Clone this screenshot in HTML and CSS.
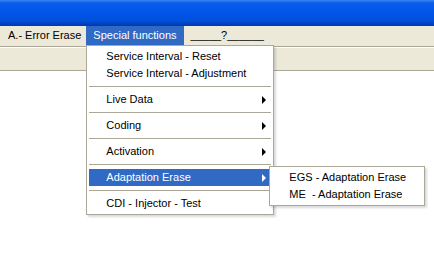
FILE: index.html
```html
<!DOCTYPE html>
<html lang="en">
<head>
    <meta charset="UTF-8">
    <title>Special functions</title>
    <link rel="stylesheet" href="styles.css">
</head>
<body>
    <!-- Window title -->
    <div class="titlebar"></div>

    <!-- Menu bar -->
    <div class="menubar">
        <div class="menu-item first">A.- Error Erase</div>
        <div class="menu-item open">Special functions
            <div class="dropdown">
                <div class="entry">Service Interval - Reset</div>
                <div class="entry">Service Interval - Adjustment</div>
                <div class="sep"></div>
                <div class="entry sub">Live Data<span class="arrow"></span></div>
                <div class="sep"></div>
                <div class="entry sub">Coding<span class="arrow"></span></div>
                <div class="sep"></div>
                <div class="entry sub">Activation<span class="arrow"></span></div>
                <div class="sep"></div>
                <div class="entry sub active">Adaptation Erase<span class="arrow"></span>
                    <div class="dropdown submenu">
                        <div class="entry">EGS - Adaptation Erase</div>
                        <div class="entry">ME&nbsp; - Adaptation Erase</div>
                    </div>
                </div>
                <div class="sep"></div>
                <div class="entry">CDI - Injector - Test</div>
            </div>
        </div>
        <div class="menu-item">_____?______</div>
    </div>

    <!-- Tool band -->
    <div class="toolband"></div>

    <div class="workspace"></div>
</body>
</html>
```

FILE: styles.css
```css
body {
    margin: 0;
    padding: 0;
    font-family: "Liberation Sans", Arial, sans-serif;
    font-size: 11px;
    color: #000;
    background-color: #fff;
}
.titlebar {
    height: 26px;
    background: linear-gradient(#3a86f4 0, #0a5ceb 12%, #0055e6 55%, #004fd8 80%, #0038b0 100%);
}
.menubar {
    display: flex;
    height: 20px;
    background-color: #ece9d8;
}
.menu-item {
    position: relative;
    height: 19px;
    line-height: 19px;
    padding: 0 7px;
    white-space: nowrap;
}
.menu-item.first {
    padding: 0 5px 0 8px;
}
.menu-item.open {
    background-color: #316ac5;
    color: #fff;
}
.dropdown {
    position: absolute;
    left: 0;
    top: 100%;
    width: 182px;
    padding: 2px;
    background-color: #fff;
    border: 1px solid #aca899;
    box-shadow: 2px 2px 2px rgba(0, 0, 0, 0.15);
    color: #000;
    z-index: 2;
}
.entry {
    position: relative;
    height: 17px;
    line-height: 17px;
    padding-left: 17px;
}
.entry.active {
    background-color: #316ac5;
    color: #fff;
}
.arrow {
    position: absolute;
    right: 5px;
    top: 5px;
    width: 0;
    height: 0;
    border-left: 4px solid #000;
    border-top: 4px solid transparent;
    border-bottom: 4px solid transparent;
}
.entry.active .arrow {
    border-left-color: #fff;
}
.sep {
    height: 1px;
    margin: 4px 0;
    background-color: #aca899;
}
.submenu {
    left: calc(100% - 2px);
    top: -3px;
    width: 150px;
}
.toolband {
    height: 23px;
    border-top: 1px solid #aca899;
    border-bottom: 1px solid #aca899;
    box-shadow: inset 0 1px 0 #fff;
    background-color: #ece9d8;
}
.workspace {
    height: 200px;
}
```
